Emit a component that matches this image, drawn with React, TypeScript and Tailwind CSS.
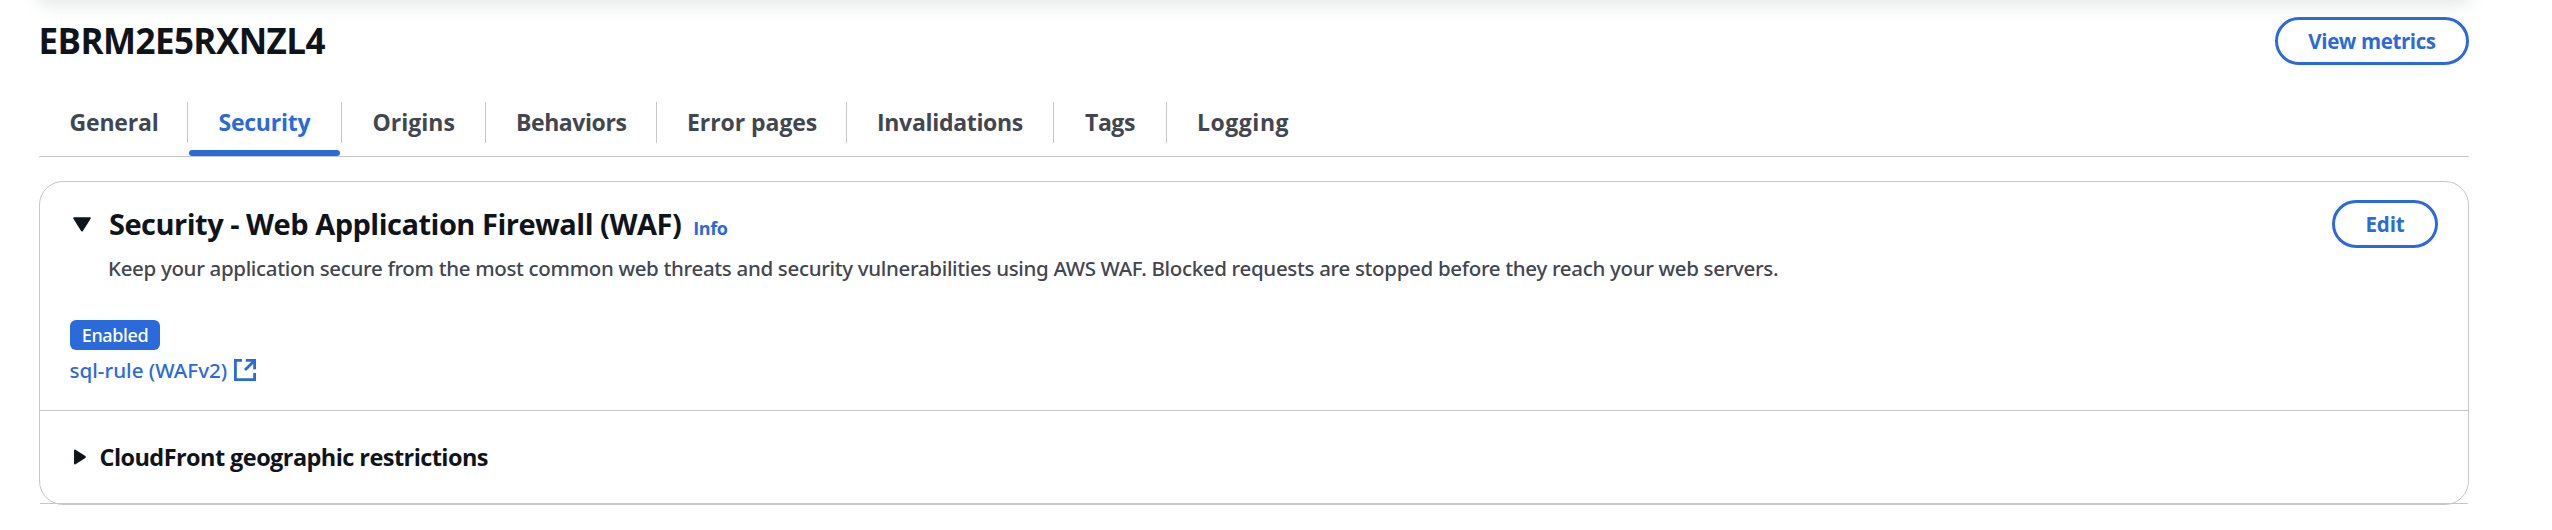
type Tab = { label: string; className: string; active?: boolean };

const tabs: Tab[] = [
  { label: "General", className: "w-[149px] pl-[30.5px] tracking-[-0.18px]" },
  { label: "Security", className: "w-[154px] pl-[30.5px] tracking-[-0.24px]", active: true },
  { label: "Origins", className: "w-[144px] pl-[30.5px]" },
  { label: "Behaviors", className: "w-[171px] pl-[30px] tracking-[-0.43px]" },
  { label: "Error pages", className: "w-[190px] pl-[30px] tracking-[-0.06px]" },
  { label: "Invalidations", className: "w-[207px] pl-[30px] tracking-[-0.31px]" },
  { label: "Tags", className: "w-[113px] pl-[31px] tracking-[-0.42px]" },
  { label: "Logging", className: "w-[152px] pl-[30px] tracking-[0.53px]" },
];

function OutlineButton({ label, className }: { label: string; className: string }) {
  return (
    <button
      className={`flex h-12 shrink-0 items-center justify-center rounded-full border-3 border-[#2b6ada] bg-white text-[20.5px] font-bold text-[#2b6ada] ${className}`}
    >
      {label}
    </button>
  );
}

function ExternalIcon() {
  return (
    <svg width="22" height="22" viewBox="0 0 22 22" fill="none" stroke="#2b6ada" strokeWidth="2.8">
      <path d="M8 1.4H1.4v19.2h19.2V14" />
      <path d="M11.8 1.4h8.8v8.8M20.6 1.4 11 11" />
    </svg>
  );
}

export default function App() {
  return (
    <div className="relative h-[530px] w-[2552px] overflow-hidden bg-white pl-[39px] font-['Open_Sans',sans-serif] text-[#0f141a]">
      <div className="absolute -top-10 left-[39px] h-8 w-[2430px] shadow-[0_13px_18px_0_#e4e8e7]" />

      <div className="relative w-[2430px]">
        <header className="flex items-start justify-between pt-[17px]">
          <h1 className="-ml-[0.5px] text-[35px] leading-[48px] font-bold tracking-[-0.57px]">EBRM2E5RXNZL4</h1>
          <OutlineButton label="View metrics" className="w-[194px] tracking-[-0.39px]" />
        </header>

        <nav className="mt-[37px] flex h-[55px] border-b border-[#c6c6cd]">
          {tabs.map((tab, i) => (
            <div key={tab.label} className="flex flex-col">
              <div
                className={`h-[41px] text-[23px] leading-[41px] font-bold whitespace-nowrap ${
                  i < tabs.length - 1 ? "border-r border-[#c6c6cd]" : ""
                } ${tab.active ? "text-[#2b6ada]" : "text-[#424650]"} ${tab.className}`}
              >
                {tab.label}
              </div>
              {tab.active && <div className="mt-[7px] mr-[2px] ml-[1px] h-[6px] rounded-[3px] bg-[#2b6ada]" />}
            </div>
          ))}
        </nav>

        <section className="relative mt-6 h-[324px] rounded-[24px] border border-[#c6c6cd]">
          <div className="flex items-start justify-between pt-[18px] pr-[30px]">
            <div className="flex pt-[6px] pl-[33px]">
              <svg className="mt-[11px]" width="18" height="15" viewBox="0 0 18 15" fill="#0f141a">
                <path d="M1 .3h16q1.2.2.6 1.5L9.9 14q-.9 1-1.8 0L.4 1.8Q-.2.5 1 .3Z" />
              </svg>
              <div className="pl-[18px]">
                <div className="flex items-baseline">
                  <h2 className="text-[29px] leading-9 font-bold tracking-[-0.5px]">Security - Web Application Firewall (WAF)</h2>
                  <a className="ml-[12px] text-[18px] leading-6 font-bold tracking-[-0.43px] text-[#2b6ada]">Info</a>
                </div>
                <p className="mt-[11px] -ml-[1px] font-['Noto_Sans',sans-serif] text-[20.5px] leading-[30px] font-medium tracking-[-0.325px] whitespace-nowrap text-[#424650]">
                  Keep your application secure from the most common web threats and security vulnerabilities using AWS WAF.
                  Blocked requests are stopped before they reach your web servers.
                </p>
              </div>
            </div>
            <OutlineButton label="Edit" className="w-[106px] tracking-[-0.2px]" />
          </div>

          <div className="mt-[37px] pl-[30px] font-['Noto_Sans',sans-serif] font-medium">
            <span className="flex h-[30px] w-[90px] items-center justify-center rounded-[6px] bg-[#2b6ada] text-[18px] leading-[30px] tracking-[-0.4px] text-white">
              Enabled
            </span>
            <a className="mt-[5px] flex h-[30px] items-center text-[20.6px] leading-[30px] text-[#2b6ada]">
              <span className="-ml-[0.5px] w-[164.5px]">sql-rule (WAFv2)</span>
              <ExternalIcon />
            </a>
          </div>

          <div className="mt-[25px] flex items-start border-t border-[#c6c6cd] pt-[30px] pl-[34px]">
            <svg className="mt-[8px]" width="12" height="16" viewBox="0 0 12 16" fill="#0f141a">
              <path d="M0 1.6Q.2.2 1.5.7l9.8 6.4q1 .9 0 1.8l-9.8 6.4Q.2 15.8 0 14.4Z" />
            </svg>
            <h3 className="pl-[13.5px] text-[23.5px] leading-8 font-bold tracking-[-0.57px]">CloudFront geographic restrictions</h3>
          </div>

          <div className="absolute right-0 bottom-0 left-0 h-px bg-[#c6c6cd]" />
        </section>
      </div>
    </div>
  );
}
